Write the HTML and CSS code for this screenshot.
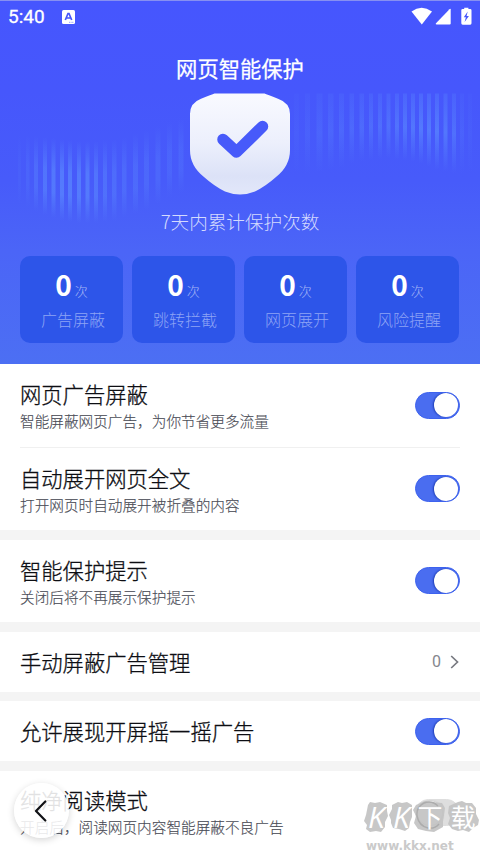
FILE: index.html
```html
<!DOCTYPE html>
<html lang="zh-CN">
<head>
<meta charset="utf-8">
<title>网页智能保护</title>
<link rel="stylesheet" href="styles.css">
</head>
<body>
<div class="screen">
  <header class="hero">
    <svg class="waves" viewBox="0 0 480 364" aria-hidden="true">
      <defs>
        <linearGradient id="bar" x1="0" y1="0" x2="0" y2="1">
          <stop offset="0" stop-color="#5b8bff" stop-opacity="0"/>
          <stop offset=".4" stop-color="#5b8bff" stop-opacity=".65"/>
          <stop offset=".68" stop-color="#5b8bff" stop-opacity=".65"/>
          <stop offset="1" stop-color="#5b8bff" stop-opacity="0"/>
        </linearGradient>
        <linearGradient id="drop" x1="0" y1="0" x2="0" y2="1">
          <stop offset="0" stop-color="#5b8bff" stop-opacity=".3"/>
          <stop offset=".5" stop-color="#5b8bff" stop-opacity=".65"/>
          <stop offset="1" stop-color="#5b8bff" stop-opacity="0"/>
        </linearGradient>
      </defs>
      <g fill="url(#bar)">
        <rect x="18" y="135" width="3" height="70" opacity=".15"/>
        <rect x="26" y="135" width="3.5" height="72" opacity=".3"/>
        <rect x="34" y="136" width="4" height="75" opacity=".55"/>
        <rect x="43" y="137" width="4" height="78" opacity=".8"/>
        <rect x="51.500" y="138" width="4" height="80" opacity=".9"/>
        <rect x="60" y="139" width="4" height="82"/>
        <rect x="68" y="140" width="4" height="82"/>
        <rect x="77" y="141" width="4" height="82"/>
        <rect x="85.500" y="141" width="4" height="82" opacity=".95"/>
        <rect x="94" y="141" width="4" height="82" opacity=".8"/>
        <rect x="103" y="140" width="4" height="82" opacity=".65"/>
        <rect x="112" y="139" width="4.500" height="82" opacity=".55"/>
        <rect x="122" y="137" width="4.500" height="80" opacity=".48"/>
        <rect x="133" y="134" width="5" height="80" opacity=".48"/>
        <rect x="144" y="130" width="5" height="80" opacity=".42"/>
        <rect x="155.500" y="126" width="5" height="78" opacity=".38"/>
        <rect x="167" y="122" width="5" height="75" opacity=".34"/>
        <rect x="178.500" y="118" width="5" height="75" opacity=".34"/>
      </g>
      <g fill="url(#drop)">
        <rect x="294" y="93.500" width="5" height="80" opacity=".15"/>
        <rect x="305" y="93.500" width="5" height="80" opacity=".25"/>
        <rect x="316.500" y="93.500" width="6" height="79" opacity=".35"/>
        <rect x="328" y="93.500" width="5.500" height="76" opacity=".4"/>
        <rect x="339" y="93.500" width="5" height="74" opacity=".45"/>
        <rect x="349.500" y="93.500" width="4.500" height="70" opacity=".5"/>
        <rect x="359.500" y="93.500" width="4.500" height="68" opacity=".55"/>
        <rect x="369" y="93.500" width="4" height="67" opacity=".6"/>
        <rect x="378" y="93.500" width="4" height="66" opacity=".65"/>
        <rect x="386.500" y="93.500" width="4" height="65" opacity=".7"/>
        <rect x="395" y="93.500" width="4" height="66" opacity=".8"/>
        <rect x="403" y="93.500" width="4" height="67" opacity=".85"/>
        <rect x="411" y="93.500" width="4" height="68" opacity=".9"/>
        <rect x="419" y="93.500" width="4" height="70"/>
        <rect x="427" y="93.500" width="4" height="73"/>
        <rect x="435" y="93.500" width="4" height="76"/>
        <rect x="443.500" y="93.500" width="4" height="78" opacity=".9"/>
        <rect x="452" y="93.500" width="4" height="80" opacity=".7"/>
        <rect x="460" y="93.500" width="4" height="80" opacity=".28"/>
        <rect x="468" y="93.500" width="4" height="80" opacity=".15"/>
      </g>
    </svg>
    <div class="status">
      <span class="clock">5:40</span>
      <svg class="kbd" viewBox="0 0 13 14"><rect width="13" height="14" rx="1.500" fill="#fff"/><path d="M3.300 10 6 3.500h1L9.700 10M4.600 8h3.800" fill="none" stroke="#4657fb" stroke-width="1.700"/><path d="M7 12.300h5" stroke="#4657fb" stroke-width=".6" stroke-dasharray="1 .6"/></svg>
      <svg class="signals" viewBox="0 0 62 19">
        <path d="M.5 4.500Q10.500-2.800 21 4.500L10.800 17.500Z" fill="#fff"/>
        <path d="M39.700 2.500V16.500q0 1-1 1H25.500q-1.500-.1-.5-1.200L38.500 2.200q1.200-.9 1.200.3Z" fill="#fff"/>
        <path d="M53.200 2V.8h4.200V2h1.800q1.300 0 1.300 1.300v13q0 1.400-1.300 1.400h-7.500q-1.400 0-1.400-1.400v-13Q50.300 2 51.700 2Z" fill="#fff"/>
        <path d="M56.700 4.600 52.800 10.300h2.100L53.600 15l4.300-6h-2.300Z" fill="#4657fb"/>
      </svg>
    </div>
    <h1 class="title">网页智能保护</h1>
    <svg class="shield" viewBox="0 0 102 102">
      <defs><linearGradient id="sh" x1="0" y1="0" x2="0" y2="1"><stop offset="0" stop-color="#f9faff"/><stop offset=".5" stop-color="#eceffc"/><stop offset=".82" stop-color="#dce2f7"/><stop offset="1" stop-color="#e2e7fa"/></linearGradient></defs>
      <path d="M25.500.5H75.500Q78 1.500 89 5.800Q101 10 101 21V57Q101 73 87 84Q77 93 66 98.500Q51 104.500 36 98.500Q25 93 15 84Q1 73 1 57V21Q1 10 12 5.800Q23 1.500 25.500.5Z" fill="url(#sh)"/>
      <path d="M34 46.500 47.500 59 73.500 33.500" fill="none" stroke="#475afa" stroke-width="11.500" stroke-linecap="round" stroke-linejoin="round"/>
    </svg>
    <p class="caption">7天内累计保护次数</p>
    <div class="stats">
      <div class="stat"><div class="count"><b>0</b><span>次</span></div><div class="label">广告屏蔽</div></div>
      <div class="stat"><div class="count"><b>0</b><span>次</span></div><div class="label">跳转拦截</div></div>
      <div class="stat"><div class="count"><b>0</b><span>次</span></div><div class="label">网页展开</div></div>
      <div class="stat"><div class="count"><b>0</b><span>次</span></div><div class="label">风险提醒</div></div>
    </div>
  </header>
  <main class="groups">
    <section class="group">
      <div class="row">
        <div class="text"><h2>网页广告屏蔽</h2><p>智能屏蔽网页广告，为你节省更多流量</p></div>
        <span class="toggle"></span>
      </div>
      <div class="row divided">
        <div class="text"><h2>自动展开网页全文</h2><p>打开网页时自动展开被折叠的内容</p></div>
        <span class="toggle"></span>
      </div>
    </section>
    <section class="group">
      <div class="row">
        <div class="text"><h2>智能保护提示</h2><p>关闭后将不再展示保护提示</p></div>
        <span class="toggle"></span>
      </div>
    </section>
    <section class="group">
      <div class="row short">
        <h2>手动屏蔽广告管理</h2>
        <div class="more"><span>0</span><svg viewBox="0 0 9 14"><path d="M1.200 1 7.500 7 1.200 13" fill="none" stroke="#777980" stroke-width="1.700"/></svg></div>
      </div>
    </section>
    <section class="group">
      <div class="row short"><h2>允许展现开屏摇一摇广告</h2><span class="toggle"></span></div>
    </section>
    <section class="group">
      <div class="row last">
        <div class="text"><h2>纯净阅读模式</h2><p>开启后，阅读网页内容智能屏蔽不良广告</p></div>
        <span class="toggle off"></span>
      </div>
    </section>
  </main>
  <div class="back"><svg viewBox="0 0 13 22"><path d="M11.300 1.500 2 11l9.300 9.500" fill="none" stroke="#111216" stroke-width="2.200" stroke-linecap="round" stroke-linejoin="round"/></svg></div>
  <div class="watermark">
    <svg viewBox="0 0 116 32" class="blobs">
      <g fill="#c3c3c3" fill-opacity=".94">
        <path d="M4 4 6 1l5 1 5-1 7 3 0 6 1 5-3 6 0 5-4 5-5-1-6 1-4-3 1-4-3-4 2-6Z"/>
        <path d="M28 4 34 1l4 1 5-1 5 3 0 6 0 6-2 5-1 6-4 3-6-2-6-1-2-5 0-3-2-5 3-6Z"/>
        <path d="M52 4 61 0l6 1 11 1 3 5-1 7-1 6 0 6-9 5-8-1-8-2-4-6 2-7-3-6Z"/>
        <path d="M85 5 94 1l4-1 4 2 6 0 4 5 0 6 3 6-1 5-5 3-4 4-6-2-5 1-6-2-4-5 2-6-2-5Z"/>
      </g>
      <path d="M74 5Q68-1 60 2Q52 6 53 15Q55 25 64 27Q71 28 75 23" fill="none" stroke="#acacac" stroke-width="1.400"/>
    </svg>
    <div class="brand"><span class="latin">K</span><span class="latin">K</span><span>下</span><span>载</span></div>
    <div class="site">www.kkx.net</div>
  </div>
</div>
</body>
</html>
```
FILE: styles.css
```css
* { box-sizing: border-box; }
body, h1, h2, p { margin: 0; font-weight: 400; }
body {
  font-family: "Noto Sans CJK SC", sans-serif;
  background: #fff;
  overflow: hidden;
}
.screen {
  position: relative;
  width: 480px;
  height: 853px;
  overflow: hidden;
}
svg { display: block; }

.hero {
  position: relative;
  height: 364px;
  display: flex;
  flex-direction: column;
  align-items: center;
  color: #fff;
  background: linear-gradient(#4656fe 0, #4657fc 90px, #475bfa 180px, #4b65f7 250px, #4c6ff3 364px);
  border-top: 1px solid #8790f1;
}
.hero > * { position: relative; flex: none; }
.hero > .waves {
  position: absolute;
  top: -1px;
  left: 0;
  width: 480px;
  height: 364px;
}
.status {
  width: 100%;
  height: 31px;
  padding: 0 7px 0 8px;
  display: flex;
  align-items: center;
}
.clock {
  font: 400 19px/31px Roboto, sans-serif;
  -webkit-text-stroke: .3px #fff;
  width: 54px;
}
.kbd { width: 13px; height: 14px; }
.signals { width: 62px; height: 19px; margin-left: auto; }
.title {
  margin-top: 21px;
  font-size: 21.3px;
  line-height: 30px;
  -webkit-text-stroke: .25px #fff;
}
.shield { width: 102px; height: 102px; margin-top: 10px; }
.caption {
  margin-top: 13px;
  font-size: 18.6px;
  line-height: 26px;
  font-weight: 300;
  color: #d4dafe;
}
.stats {
  width: 100%;
  margin-top: 22px;
  padding: 0 21px 0 20px;
  display: grid;
  grid-template-columns: repeat(4, 1fr);
  gap: 9px;
}
.stat {
  height: 87px;
  border-radius: 10px;
  background: #2d55e9;
  padding-top: 12px;
  text-align: center;
}
.count {
  display: flex;
  justify-content: center;
  align-items: baseline;
  gap: 3px;
  height: 37px;
  line-height: 32px;
}
.count b { font: 700 28px/32px "Noto Sans CJK SC", sans-serif; }
.count span { font-size: 13px; font-weight: 300; color: #a5b6f6; }
.label {
  font-size: 16px;
  line-height: 28px;
  font-weight: 300;
  color: #8da4f5;
  padding-left: 3px;
}

.groups {
  display: flex;
  flex-direction: column;
  gap: 9.5px;
  background: #f4f4f4;
}
.group { background: #fff; padding: 0 20px; }
.row {
  height: 82.5px;
  display: flex;
  align-items: center;
  justify-content: space-between;
}
.row.divided { border-top: 1px solid #f0f0f0; height: 83.5px; }
.row.short { height: 60px; }
.row.last { height: 84px; }
.text { padding-top: 2px; }
.row.last .text { margin-top: -4px; }
h2 {
  font-size: 21.3px;
  line-height: 30px;
  font-weight: 300;
  color: #0d0e13;
  -webkit-text-stroke: .3px #0d0e13;
}
.text p {
  font-size: 14.65px;
  line-height: 22px;
  font-weight: 300;
  color: #4a4c56;
  -webkit-text-stroke: .15px #4a4c56;
}
.text h2 { line-height: 28px; padding-bottom: 2px; }
.toggle {
  width: 45px;
  height: 27px;
  padding: 1.5px;
  border-radius: 14px;
  background: #4a6df0;
  border: 1px solid #3d62ee;
  display: flex;
  justify-content: flex-end;
  align-items: center;
  overflow: hidden;
}
.toggle::after {
  content: "";
  width: 24px;
  height: 24px;
  flex: none;
  border-radius: 50%;
  background: #fff;
  box-shadow: -1px 0 2px #1d3cb4;
}
.toggle.off {
  background: #dedede;
  border-color: #dedede;
  justify-content: flex-start;
}
.toggle.off::after { box-shadow: 0 1px 3px #999; }
.more {
  display: flex;
  align-items: center;
  gap: 9px;
  padding-right: 1px;
  font: 400 16px/20px Roboto, sans-serif;
  color: #85878e;
}
.more svg { width: 9px; height: 14px; }

.back {
  position: absolute;
  left: 14px;
  top: 783px;
  width: 55px;
  height: 55px;
  border-radius: 50%;
  background: rgba(255, 255, 255, .88);
  box-shadow: 0 2px 7px rgba(0, 0, 0, .17);
  display: flex;
  align-items: center;
  justify-content: center;
  padding-right: 3px;
}
.back svg { width: 13px; height: 22px; }

.watermark {
  position: absolute;
  left: 364px;
  top: 801px;
  width: 116px;
}
.blobs { width: 116px; height: 32px; }
.brand {
  position: absolute;
  top: 0;
  left: 0;
  width: 116px;
  height: 32px;
  display: grid;
  grid-template-columns: 25px 25px 32px 34px;
  color: #fff;
  text-align: center;
  font-size: 25px;
  line-height: 30px;
}
.latin {
  font: italic 400 30px/32px "Open Sans", sans-serif;
}
.site {
  margin-top: 6px;
  padding-left: 2px;
  font: 700 12px/14px "DejaVu Sans", sans-serif;
  color: #cacaca;
}
```
